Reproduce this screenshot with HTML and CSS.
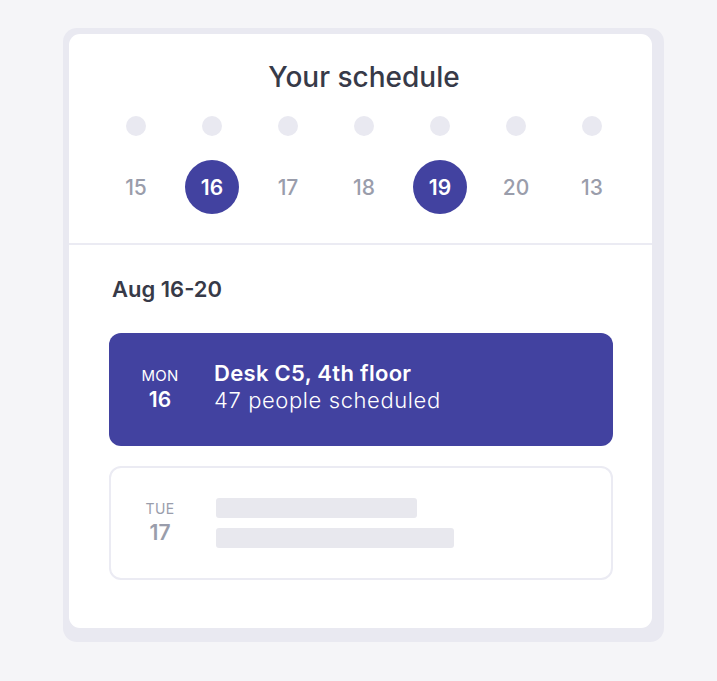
FILE: index.html
```html
<!DOCTYPE html>
<html lang="en">
<head>
<meta charset="utf-8">
<title>Your schedule</title>
<link rel="stylesheet" href="styles.css">
</head>
<body>
<div class="frame">
  <div class="card">
    <section class="top">
      <h1 class="title">Your schedule</h1>
      <div class="week">
        <div class="day"><span class="dot"></span><span class="num">15</span></div>
        <div class="day"><span class="dot"></span><span class="num sel">16</span></div>
        <div class="day"><span class="dot"></span><span class="num">17</span></div>
        <div class="day"><span class="dot"></span><span class="num">18</span></div>
        <div class="day"><span class="dot"></span><span class="num sel">19</span></div>
        <div class="day"><span class="dot"></span><span class="num">20</span></div>
        <div class="day"><span class="dot"></span><span class="num">13</span></div>
      </div>
    </section>
    <section class="bottom">
      <h2 class="range">Aug 16-20</h2>
      <div class="entry active">
        <div class="date"><span class="wd">MON</span><span class="dn">16</span></div>
        <div class="info">
          <div class="place">Desk C5, 4th floor</div>
          <div class="people">47 people scheduled</div>
        </div>
      </div>
      <div class="entry empty">
        <div class="date"><span class="wd">TUE</span><span class="dn">17</span></div>
        <div class="bars">
          <span class="bar b1"></span>
          <span class="bar b2"></span>
        </div>
      </div>
    </section>
  </div>
</div>
</body>
</html>
```
FILE: styles.css
```css
* { box-sizing: border-box; }
html, body { margin: 0; padding: 0; }
body {
  background: #f5f5f8;
  font-family: Inter, Lato, "Noto Sans", sans-serif;
  color: #373a48;
  width: 717px;
  height: 681px;
}
.frame {
  position: relative;
  margin: 28px 0 0 63px;
  width: 601px;
  height: 614px;
  background: #e9e9f1;
  border-radius: 14px;
  padding: 6px 12px 14px 6px;
}
.card {
  background: #fff;
  border-radius: 11px;
  height: 594px;
  display: flex;
  flex-direction: column;
}
.top {
  padding: 27px 22px 29px 29px;
  border-bottom: 2px solid #ebebf3;
}
.title {
  margin: 0;
  text-align: center;
  font-size: 28px;
  line-height: 32px;
  font-weight: 500;
  color: #373a48;
}
.week {
  margin-top: 23px;
  display: grid;
  grid-template-columns: repeat(7, 76px);
}
.day {
  display: flex;
  flex-direction: column;
  align-items: center;
}
.dot {
  width: 20px;
  height: 20px;
  border-radius: 50%;
  background: #e9e9f1;
}
.num {
  margin-top: 24px;
  width: 54px;
  height: 54px;
  border-radius: 50%;
  display: flex;
  align-items: center;
  justify-content: center;
  font-size: 21px;
  color: #9a9dab;
  font-weight: 500;
}
.num.sel {
  background: #4242a0;
  color: #fff;
  font-weight: 600;
}
.bottom {
  padding: 32px 39px 0 40px;
}
.range {
  margin: 0 0 0 3px;
  font-size: 22px;
  line-height: 24px;
  font-weight: 600;
  color: #373a48;
}
.entry {
  display: flex;
  align-items: center;
  border-radius: 12px;
  height: 113px;
  padding-left: 16px;
}
.entry.active {
  margin-top: 32px;
  background: #4242a0;
  color: #fff;
}
.entry.empty {
  margin-top: 20px;
  height: 114px;
  border: 2px solid #ebebf3;
  padding-left: 14px;
}
.date {
  width: 70px;
  display: flex;
  flex-direction: column;
  align-items: center;
  margin-right: 19px;
}
.wd {
  font-size: 15px;
  line-height: 20px;
  letter-spacing: 0.3px;
}
.dn {
  font-size: 21px;
  line-height: 28px;
  font-weight: 600;
}
.empty .date { color: #9a9dab; }
.empty .wd { font-size: 14px; }
.info {
  display: flex;
  flex-direction: column;
  padding-bottom: 6px;
}
.place {
  font-size: 22px;
  line-height: 27px;
  font-weight: 600;
  letter-spacing: 0.3px;
}
.people {
  font-size: 22px;
  line-height: 27px;
  font-weight: 300;
  letter-spacing: 0.6px;
}
.bars {
  display: flex;
  flex-direction: column;
  gap: 10px;
  padding-left: 2px;
}
.bar {
  display: block;
  height: 20px;
  border-radius: 3px;
  background: #e8e8ee;
}
.b1 { width: 201px; }
.b2 { width: 238px; }
```
